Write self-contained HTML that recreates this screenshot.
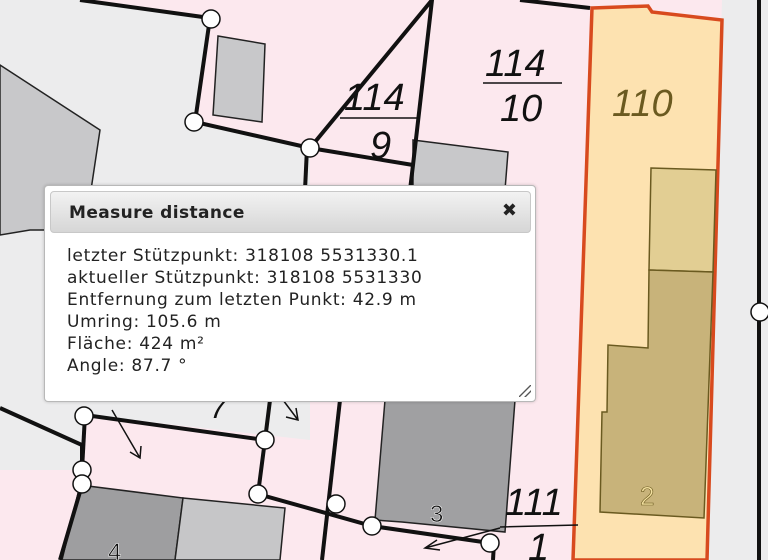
<!DOCTYPE html>
<html><head><meta charset="utf-8"><style>
html,body{margin:0;padding:0;width:768px;height:560px;overflow:hidden;background:#fce8ee}
svg{position:absolute;left:0;top:0}
.dlg{position:absolute;left:44px;top:185px;width:490px;height:215px;background:#fff;border:1px solid #b8b8b8;border-radius:4px;box-shadow:0 0 3px rgba(0,0,0,.2);font-family:"DejaVu Sans","Liberation Sans",sans-serif}
.hd{position:absolute;left:5px;top:5px;right:4px;height:40px;border:1px solid #c8c8c8;border-radius:4px;background:linear-gradient(#f2f2f2,#d6d6d6)}
.hd b{position:absolute;left:18px;top:11px;font-size:17px;letter-spacing:.4px;color:#222}
.hd i{position:absolute;right:13px;top:8px;font-style:normal;font-weight:bold;font-size:18px;color:#222}
.ct{position:absolute;left:22px;top:59px;font-size:17px;letter-spacing:.7px;line-height:22px;color:#222;white-space:pre}
.rs{position:absolute;right:4px;bottom:4px;width:12px;height:12px;background:linear-gradient(135deg,transparent 45%,#555 47%,#555 53%,transparent 55%,transparent 70%,#555 72%,#555 78%,transparent 80%)}
</style></head><body>
<svg width="768" height="560" viewBox="0 0 768 560" font-family="Liberation Sans,sans-serif" font-style="italic">
<polygon points="0,0 80,0 210,18 195,122 310,148 310,440 85,415 80,470 0,470" fill="#ececed"/>
<polygon points="722,0 768,0 768,560 705,560" fill="#ececed"/>
<polygon points="0,65 100,130 85,230 30,230 0,235" fill="#c8c8ca" stroke="#222" stroke-width="1.5"/>
<polygon points="218,36 265,44 262,122 213,115" fill="#c8c8ca" stroke="#222" stroke-width="1.5"/>
<polygon points="413,140 508,152 505,190 413,190" fill="#c8c8ca" stroke="#222" stroke-width="1.5"/>
<polygon points="385,400 515,400 505,532 402,522 375,520" fill="#a0a0a2" stroke="#222" stroke-width="1.5"/>
<polygon points="80,485 183,498 175,560 62,560" fill="#9e9ea0" stroke="#222" stroke-width="1.5"/>
<polygon points="183,498 285,508 280,560 175,560" fill="#c6c6c8" stroke="#222" stroke-width="1.5"/>
<polygon points="592,8 648,6 652,12 722,20 707,560 573,560" fill="#fde2b0" stroke="#d84a1e" stroke-width="3.5"/>
<polygon points="651,168 716,170 713,272 649,270" fill="#e2ce93" stroke="#6a5a20" stroke-width="1.5"/>
<polygon points="649,270 713,272 704,518 600,512 602,412 607,412 608,345 648,348" fill="#c8b37a" stroke="#6a5a20" stroke-width="1.5"/>
<g stroke="#111" stroke-width="4" fill="none">
<path d="M80,0 L210,18 L195,122 L310,148 L413,165"/>
<path d="M590,8 L520,0"/>
<path d="M310,148 L432,0 L413,165 L410,190"/>
<path d="M307,148 L305,190"/>
<path d="M759,0 L759,560"/>
<path d="M0,408 L82,445 L82,485 L60,560"/>
<path d="M85,415 L265,440 L258,494 L372,526 L490,543"/>
<path d="M85,415 L82,470"/>
<path d="M265,440 L270,400"/>
<path d="M340,400 L322,560"/>
<path d="M494,543 L493,560"/>
</g>
<g stroke="#111" stroke-width="1.5" fill="none">
<path d="M483,83 L562,83 M340,118 L418,118 M500,527 L578,525"/>
<path d="M112,410 L140,458 M130,452 L140,458 L141,446"/>
<path d="M283,400 L298,420 M286,417 L298,420 L296,408"/>
<path d="M500,528 L425,548 M437,540 L425,548 L440,550"/>
</g>
<g fill="#fff" stroke="#111" stroke-width="1.5">
<circle cx="211" cy="19" r="9"/><circle cx="194" cy="122" r="9"/><circle cx="310" cy="148" r="9"/>
<circle cx="760" cy="312" r="9"/><circle cx="84" cy="416" r="9"/><circle cx="265" cy="440" r="9"/>
<circle cx="82" cy="470" r="9"/><circle cx="82" cy="484" r="9"/><circle cx="258" cy="494" r="9"/>
<circle cx="336" cy="504" r="9"/><circle cx="372" cy="526" r="9"/><circle cx="490" cy="543" r="9"/>
</g>
<g font-size="38" fill="#111">
<text x="485" y="76">114</text><text x="500" y="121">10</text>
<text x="344" y="110">114</text><text x="370" y="158">9</text>
<text x="505" y="515">111</text><text x="528" y="560">1</text>
<text x="210" y="418" font-size="30">7</text>
</g>
<text x="612" y="116" font-size="38" fill="#6b5a20">110</text>
<text x="640" y="505" font-size="26" font-style="normal" fill="#f3e0a0" stroke="#6b5a20" stroke-width=".6">2</text>
<text x="430" y="522" font-size="24" font-style="normal" fill="#111" stroke="#fff" stroke-width=".5">3</text>
<text x="108" y="560" font-size="24" font-style="normal" fill="#111" stroke="#fff" stroke-width=".5">4</text>
</svg>
<div class="dlg">
<div class="hd"><b>Measure distance</b><i>✖</i></div>
<div class="ct">letzter Stützpunkt: 318108 5531330.1
aktueller Stützpunkt: 318108 5531330
Entfernung zum letzten Punkt: 42.9 m
Umring: 105.6 m
Fläche: 424 m²
Angle: 87.7 °</div>
<div class="rs"></div>
</div>
</body></html>
